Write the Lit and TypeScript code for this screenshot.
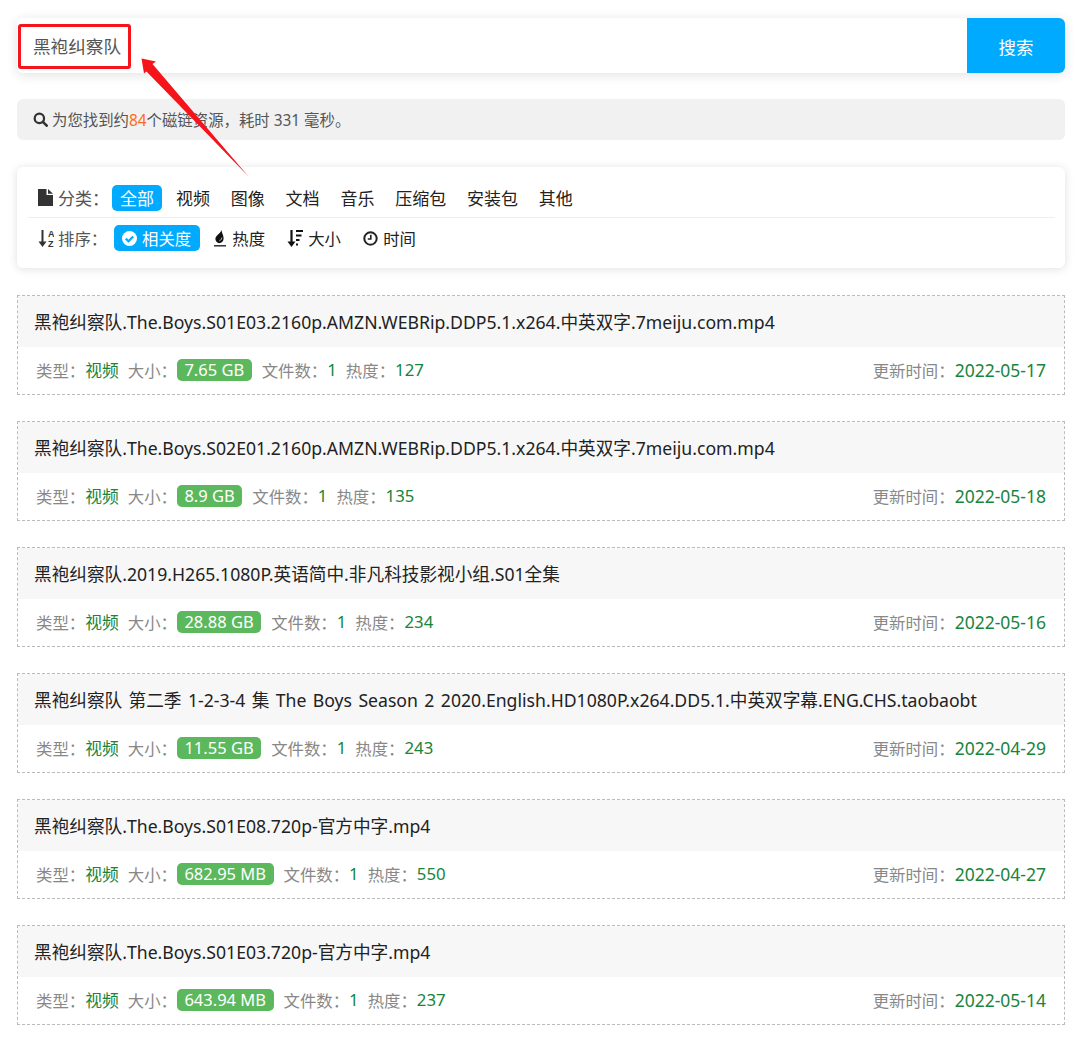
import { LitElement, css, html, svg } from 'lit';
import { customElement } from 'lit/decorators.js';

interface ResultItem {
  title: string;
  size: string;
  heat: string;
  date: string;
}

const RESULTS: ResultItem[] = [
  { title: '黑袍纠察队.The.Boys.S01E03.2160p.AMZN.WEBRip.DDP5.1.x264.中英双字.7meiju.com.mp4', size: '7.65 GB', heat: '127', date: '2022-05-17' },
  { title: '黑袍纠察队.The.Boys.S02E01.2160p.AMZN.WEBRip.DDP5.1.x264.中英双字.7meiju.com.mp4', size: '8.9 GB', heat: '135', date: '2022-05-18' },
  { title: '黑袍纠察队.2019.H265.1080P.英语简中.非凡科技影视小组.S01全集', size: '28.88 GB', heat: '234', date: '2022-05-16' },
  { title: '黑袍纠察队 第二季 1-2-3-4 集 The Boys Season 2 2020.English.HD1080P.x264.DD5.1.中英双字幕.ENG.CHS.taobaobt', size: '11.55 GB', heat: '243', date: '2022-04-29' },
  { title: '黑袍纠察队.The.Boys.S01E08.720p-官方中字.mp4', size: '682.95 MB', heat: '550', date: '2022-04-27' },
  { title: '黑袍纠察队.The.Boys.S01E03.720p-官方中字.mp4', size: '643.94 MB', heat: '237', date: '2022-05-14' },
];

const CATEGORIES = ['视频', '图像', '文档', '音乐', '压缩包', '安装包', '其他'];

const iconSearch = svg`<svg class="ic" width="15" height="15" viewBox="0 0 16 16"><circle cx="6.8" cy="6.8" r="5" fill="none" stroke="#333" stroke-width="2.4"/><path d="M10.5 10.5 14.6 14.6" stroke="#333" stroke-width="2.8" stroke-linecap="round"/></svg>`;
const iconFile = svg`<svg class="ic" width="15" height="17" viewBox="0 0 15 17"><path d="M0 0H8.5V6H15V17H0Z M10 0 15 4.8H10Z" fill="#333"/></svg>`;
const iconAlpha = svg`<svg class="ic" width="16" height="19" viewBox="0 0 16 19"><path d="M4.5 1V14" stroke="#333" stroke-width="2"/><path d="M0.5 12.5H8.5L4.5 18Z" fill="#333"/><text x="10" y="8" font-size="9" font-weight="700" font-family="Liberation Sans" fill="#333">A</text><text x="10" y="18" font-size="9" font-weight="700" font-family="Liberation Sans" fill="#333">Z</text></svg>`;
const iconCheck = svg`<svg class="ic" width="15" height="15" viewBox="0 0 15 15"><circle cx="7.5" cy="7.5" r="7.5" fill="#fff"/><path d="M3.8 7.6 6.5 10.2 11.2 5.4" fill="none" stroke="#00abff" stroke-width="2.2"/></svg>`;
const iconFlame = svg`<svg class="ic" width="13" height="17" viewBox="0 0 13 17"><path d="M7.5 0C7.6 3 9.6 5 9.6 8.2 9.6 11 8 13 5 13.2 2.6 12.4 1.4 10.8 1.4 8.8 1.4 5.8 6 4 7.5 0Z" fill="#111"/><path d="M5.5 10.8C6.8 10.2 7.6 9.2 7.8 7.6" fill="none" stroke="#fff" stroke-width="0.8"/><path d="M0 15.8H12" stroke="#222" stroke-width="1.4"/></svg>`;
const iconAmount = svg`<svg class="ic" width="16" height="19" viewBox="0 0 16 19"><path d="M4.5 1V14" stroke="#111" stroke-width="2.2"/><path d="M0.5 12.5H8.5L4.5 18Z" fill="#111"/><path d="M9 2H16M9 6.5H14.5M9 11H12.5M9 15.5H11" stroke="#111" stroke-width="2"/></svg>`;
const iconClock = svg`<svg class="ic" width="15" height="15" viewBox="0 0 15 15"><circle cx="7.5" cy="7.5" r="6.2" fill="none" stroke="#222" stroke-width="2"/><path d="M7.8 3.8V8H4.8" fill="none" stroke="#222" stroke-width="1.6"/></svg>`;

@customElement('app-root')
export class AppRoot extends LitElement {
  static styles = css`
    :host {
      display: block;
      position: relative;
      height: 1039px;
      overflow: hidden;
      background: #fff;
      font-family: 'Noto Sans', 'Noto Sans CJK SC', sans-serif;
      color: #333;
    }

    .page {
      padding: 18px 15px 0 17px;
    }

    .ic {
      flex: none;
    }

    .search {
      display: flex;
      height: 55px;
      border-radius: 6px;
      background: #fff;
      box-shadow: 0 2px 12px rgba(0, 0, 0, 0.12);
    }

    .query {
      flex: 1;
      display: flex;
      align-items: center;
      padding-left: 16px;
      font-size: 17.6px;
      color: #555;
    }

    .go {
      width: 98px;
      display: flex;
      align-items: center;
      justify-content: center;
      padding-top: 2px;
      box-sizing: border-box;
      background: #00abff;
      border-radius: 0 6px 6px 0;
      color: #fff;
      font-size: 17.5px;
    }

    .info {
      display: flex;
      align-items: center;
      gap: 4px;
      height: 41px;
      margin-top: 26px;
      padding-left: 16px;
      border-radius: 6px;
      background: #f1f1f1;
      font-size: 15.4px;
      color: #555;
    }

    .info em {
      font-style: normal;
      color: #ff6a13;
    }

    .filters {
      margin-top: 27px;
      height: 101px;
      box-sizing: border-box;
      padding: 11px 10px 0 21px;
      border-radius: 6px;
      background: #fff;
      box-shadow: 0 1px 10px rgba(0, 0, 0, 0.13);
    }

    .row {
      display: flex;
      align-items: center;
      height: 39px;
      font-size: 17px;
      color: #222;
    }

    .row + .row {
      height: 40px;
      margin-left: -10px;
      padding-left: 10px;
      border-top: 1px solid #eee;
      font-size: 16.4px;
    }

    .label {
      display: flex;
      align-items: center;
      gap: 5px;
      width: 74px;
      color: #555;
    }

    .row + .row .label {
      width: 75.5px;
      gap: 4px;
    }

    .opt {
      display: flex;
      align-items: center;
      gap: 5.6px;
      height: 26px;
      margin-right: 20.8px;
      border-radius: 5px;
    }

    .row + .row .opt {
      margin-right: 21.6px;
    }

    .opt.on {
      background: #00abff;
      color: #fff;
      padding: 0 8px;
      margin-right: 14px;
    }

    .row + .row .opt.on {
      gap: 5px;
      padding: 0 8.5px;
      margin-right: 14px;
    }

    .item {
      margin-top: 26px;
      height: 100px;
      box-sizing: border-box;
      border: 1px dashed #bbb;
    }

    .filters + .item {
      margin-top: 27px;
    }

    .title {
      height: 51px;
      box-sizing: border-box;
      display: flex;
      align-items: center;
      padding: 0 0 1px 16px;
      background: #f7f7f7;
      font-size: 17.65px;
      word-spacing: 1.8px;
      color: #222;
      white-space: nowrap;
    }

    .meta {
      display: flex;
      align-items: center;
      height: 46px;
      box-sizing: border-box;
      padding: 0 18px 1px;
      font-size: 16.4px;
      color: #888;
    }

    .meta b {
      font-size: 16.8px;
      font-weight: 400;
      color: #18853b;
      margin-right: 9px;
    }

    .size {
      height: 22px;
      display: flex;
      align-items: center;
      padding: 0 7.5px;
      margin-right: 10px;
      border-radius: 5px;
      background: #5cb85c;
      color: #fff;
      font-size: 16.5px;
    }

    .date {
      margin-left: auto;
    }

    .meta .date b {
      font-size: 17.5px;
      margin-right: 0;
    }

    .mark {
      position: absolute;
      left: 18px;
      top: 24px;
      width: 113px;
      height: 45px;
      box-sizing: border-box;
      border: 3px solid #f5141a;
      border-radius: 3px;
    }

    .arrow {
      position: absolute;
      left: 0;
      top: 0;
      pointer-events: none;
    }
  `;

  private renderItem(item: ResultItem) {
    return html`
      <div class="item">
        <div class="title">${item.title}</div>
        <div class="meta">
          类型：<b>视频</b>大小：<span class="size">${item.size}</span>文件数：<b>1</b>热度：<b>${item.heat}</b>
          <span class="date">更新时间：<b>${item.date}</b></span>
        </div>
      </div>
    `;
  }

  render() {
    return html`
      <div class="page">
        <div class="search">
          <div class="query">黑袍纠察队</div>
          <div class="go">搜索</div>
        </div>
        <div class="info">${iconSearch}<span>为您找到约<em>84</em>个磁链资源，耗时 331 毫秒。</span></div>
        <div class="filters">
          <div class="row">
            <span class="label">${iconFile}分类：</span>
            <span class="opt on">全部</span>
            ${CATEGORIES.map((name) => html`<span class="opt">${name}</span>`)}
          </div>
          <div class="row">
            <span class="label">${iconAlpha}排序：</span>
            <span class="opt on">${iconCheck}相关度</span>
            <span class="opt">${iconFlame}热度</span>
            <span class="opt">${iconAmount}大小</span>
            <span class="opt">${iconClock}时间</span>
          </div>
        </div>
        ${RESULTS.map((item) => this.renderItem(item))}
      </div>
      <div class="mark"></div>
      <svg class="arrow" width="300" height="200" viewBox="0 0 300 200">
        <path d="M141.5 58.5 156 61.5 152.5 64 248.5 176.5 146.5 71.5 144 73.5Z" fill="#f5141a" />
      </svg>
    `;
  }
}
